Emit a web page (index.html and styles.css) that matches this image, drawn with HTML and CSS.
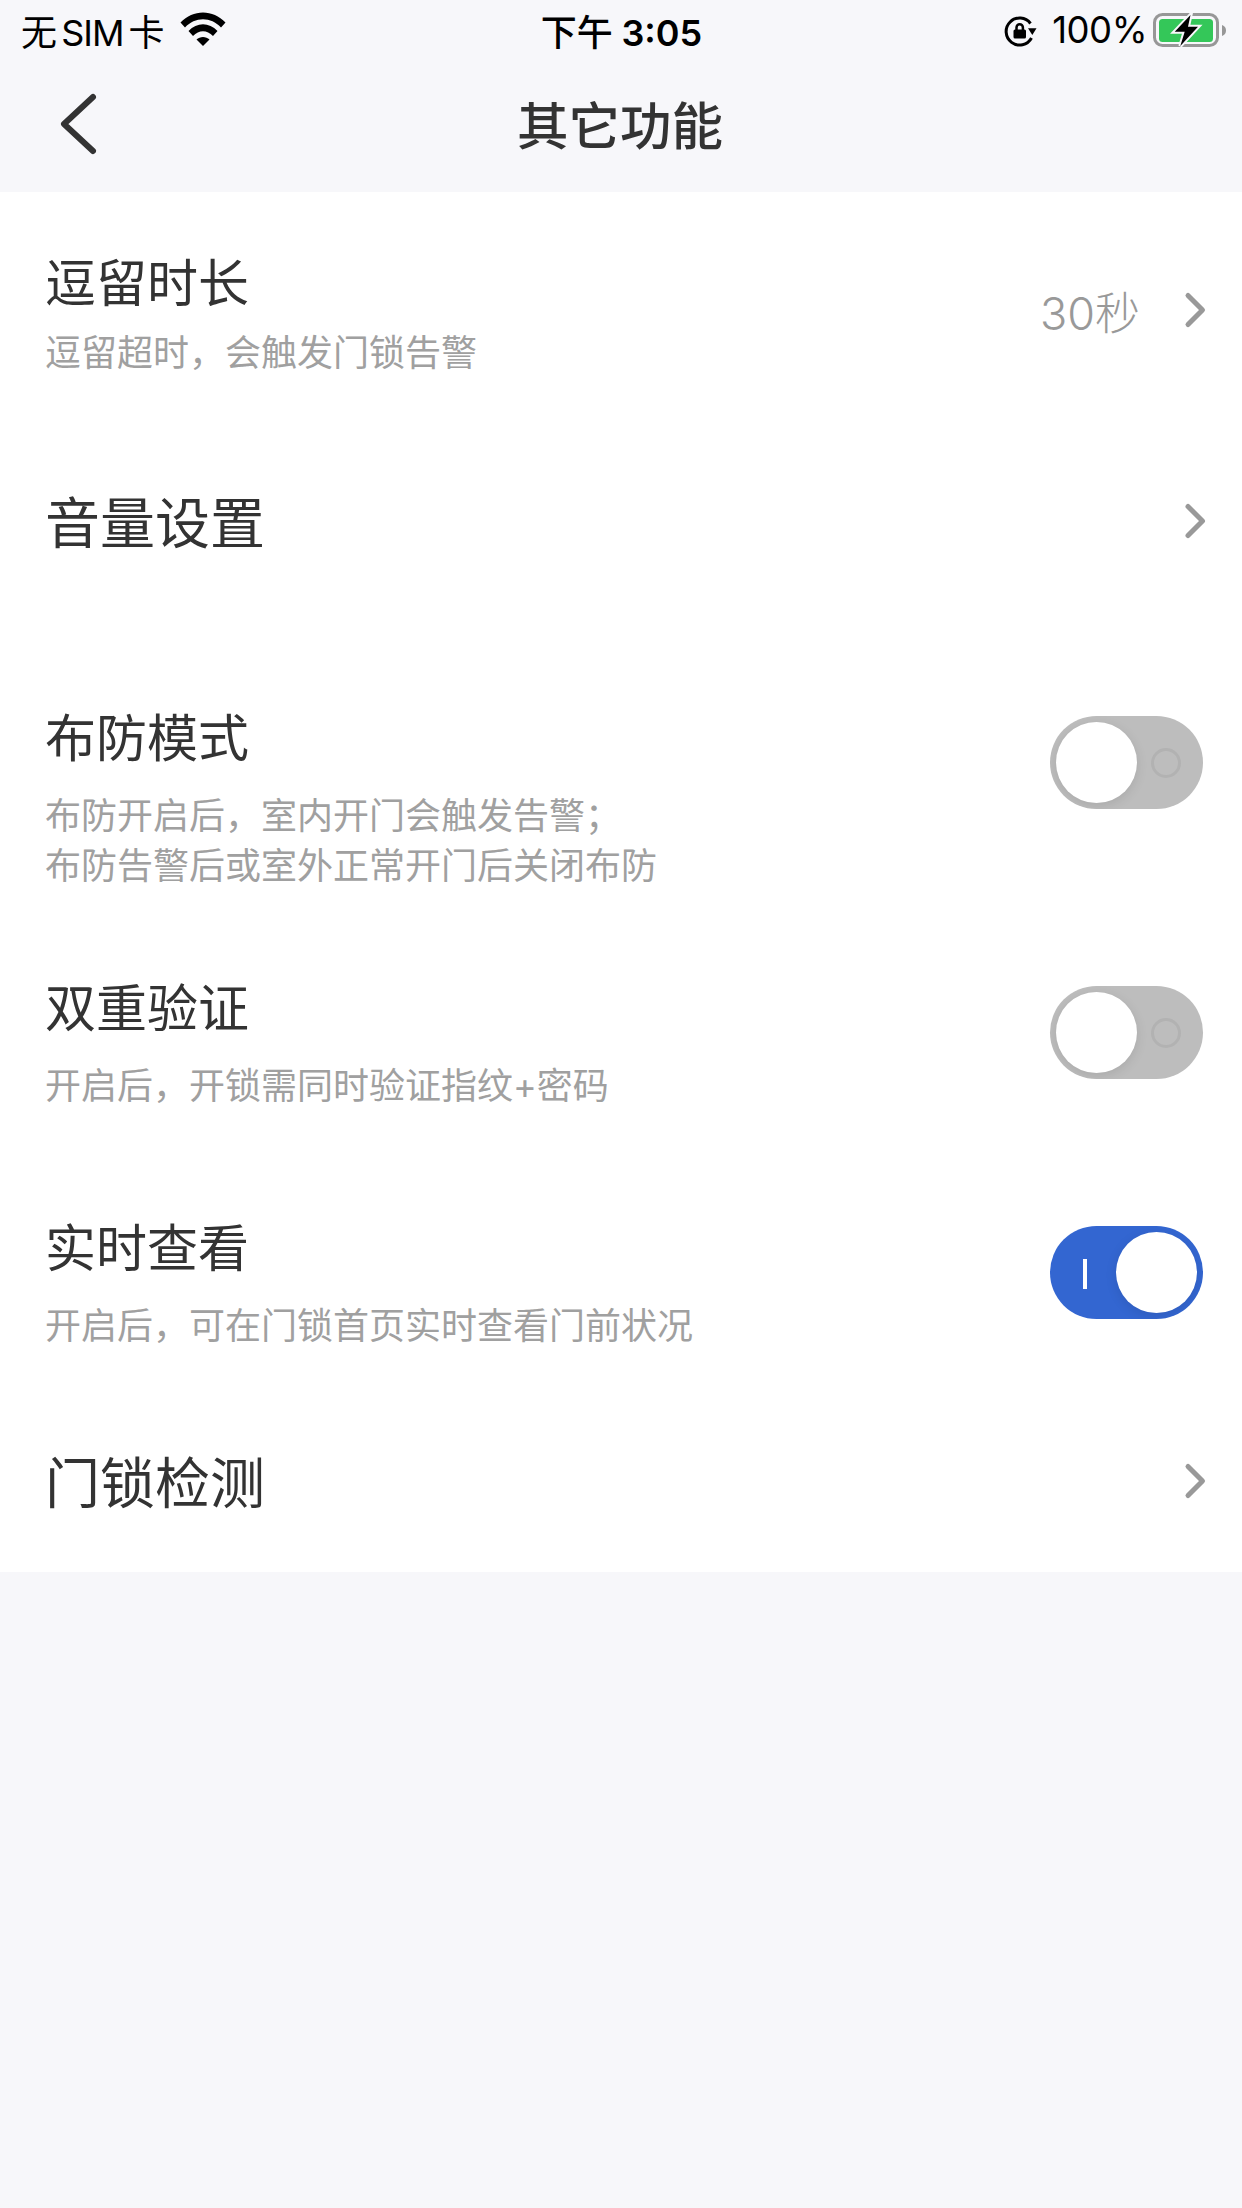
FILE: index.html
```html
<!DOCTYPE html>
<html lang="zh-CN">
<head>
    <meta charset="UTF-8">
    <meta name="viewport" content="width=device-width, initial-scale=1.0">
    <title>其它功能</title>
    <link rel="stylesheet" href="styles.css">
</head>
<body>
    <div class="status-bar">
        <div class="status-left">
            <span class="carrier">无 SIM 卡</span>
            <svg class="wifi-icon" width="46" height="34" viewBox="0 0 46 34">
                <path d="M0.5 10.5C13 -3 33 -3 45.5 10.5L41 15.5C31 4.5 15 4.5 5 15.5Z"/>
                <path d="M8.5 19C17 10 29 10 37.5 19L33 24C27 17.5 19 17.5 13 24Z"/>
                <path d="M16.5 27.500C20 24 26 24 29.500 27.500L23 34Z"/>
            </svg>
        </div>
        <div class="status-time">下午 <b>3:05</b></div>
        <div class="status-right">
            <svg class="lock-icon" width="34" height="32" viewBox="0 0 34 32">
                <path class="lock-ring" d="M27.500 23A13.500 13.500 0 1 1 26.500 8.500"/>
                <path d="M24 13.300H32.500L28.300 20Z"/>
                <path class="lock-shackle" d="M12.500 15V12.500A3.200 3.200 0 0 1 18.900 12.500V15"/>
                <rect x="9.500" y="14.500" width="12.500" height="9" rx="1.500"/>
            </svg>
            <span class="battery-text">100%</span>
            <svg class="battery-icon" width="75" height="36" viewBox="0 0 75 36">
                <rect class="battery-case" x="2.500" y="2.500" width="63" height="31" rx="8"/>
                <rect class="battery-level" x="7" y="7" width="54" height="23" rx="3.500"/>
                <path class="battery-nub" d="M70 13C73 14 74 16 74 18.500C74 21 73 23 70 24Z"/>
                <path class="battery-bolt" d="M38.500 3L22.700 19.700H32.700L28.300 34L46 14.700H36Z"/>
            </svg>
        </div>
    </div>

    <div class="nav-bar">
        <svg class="back-icon" width="40" height="64" viewBox="0 0 40 64">
            <path d="M34 5L5 32L34 59"/>
        </svg>
        <div class="nav-title">其它功能</div>
    </div>

    <div class="settings-list">
        <div class="setting-row">
            <div class="setting-text">
                <div class="setting-title">逗留时长</div>
                <div class="setting-desc">逗留超时，会触发门锁告警</div>
            </div>
            <span class="setting-value">30秒</span>
            <svg class="chevron chevron-raised" width="24" height="40" viewBox="0 0 24 40">
                <path d="M4 5.500L18.500 20L4 34.500"/>
            </svg>
        </div>

        <div class="setting-row row-plain row-gap">
            <div class="setting-text">
                <div class="setting-title">音量设置</div>
            </div>
            <svg class="chevron" width="24" height="40" viewBox="0 0 24 40">
                <path d="M4 5.500L18.500 20L4 34.500"/>
            </svg>
        </div>

        <div class="setting-row row-switch row-tall">
            <div class="setting-text">
                <div class="setting-title">布防模式</div>
                <div class="setting-desc">布防开启后，室内开门会触发告警；<br>布防告警后或室外正常开门后关闭布防</div>
            </div>
            <div class="switch"><span class="switch-mark"></span><span class="switch-knob"></span></div>
        </div>

        <div class="setting-row row-switch">
            <div class="setting-text">
                <div class="setting-title">双重验证</div>
                <div class="setting-desc">开启后，开锁需同时验证指纹+密码</div>
            </div>
            <div class="switch"><span class="switch-mark"></span><span class="switch-knob"></span></div>
        </div>

        <div class="setting-row row-switch row-short">
            <div class="setting-text">
                <div class="setting-title">实时查看</div>
                <div class="setting-desc">开启后，可在门锁首页实时查看门前状况</div>
            </div>
            <div class="switch switch-on"><span class="switch-mark"></span><span class="switch-knob"></span></div>
        </div>

        <div class="setting-row row-plain">
            <div class="setting-text">
                <div class="setting-title">门锁检测</div>
            </div>
            <svg class="chevron" width="24" height="40" viewBox="0 0 24 40">
                <path d="M4 5.500L18.500 20L4 34.500"/>
            </svg>
        </div>
    </div>
</body>
</html>
```

FILE: styles.css
```css
body {
    margin: 0;
    width: 1242px;
    height: 2208px;
    overflow: hidden;
    background-color: #f7f7fa;
    color: #333;
    font-family: "Inter", "Noto Sans CJK SC", sans-serif;
}

/* status bar */
.status-bar {
    height: 60px;
    padding: 0 15px 0 21px;
    display: grid;
    grid-template-columns: 1fr auto 1fr;
    align-items: center;
    color: #000;
    font-size: 36px;
}
.status-left {
    display: flex;
    align-items: center;
}
.carrier {
    letter-spacing: -1px;
    word-spacing: -4px;
    white-space: nowrap;
}
.wifi-icon {
    margin-left: 16px;
    margin-top: -2px;
}
.status-time {
    font-weight: 500;
    white-space: nowrap;
    word-spacing: -1px;
    margin-right: 5px;
}
.status-time b {
    font-weight: 600;
}
.status-right {
    display: flex;
    align-items: center;
    justify-content: flex-end;
}
.lock-icon {
    margin-right: 14px;
    margin-top: 2px;
}
.lock-ring {
    fill: none;
    stroke: #000;
    stroke-width: 3;
}
.lock-shackle {
    fill: none;
    stroke: #000;
    stroke-width: 2.500;
}
.battery-text {
    font-size: 36.500px;
    letter-spacing: -0.500px;
    margin-right: 5px;
}
.battery-case {
    fill: none;
    stroke: #979797;
    stroke-width: 3;
}
.battery-level {
    fill: #34c759;
}
.battery-nub {
    fill: #979797;
}
.battery-bolt {
    fill: #000;
    stroke: #f7f7fa;
    stroke-width: 4;
    paint-order: stroke;
}

/* nav bar */
.nav-bar {
    position: relative;
    height: 132px;
    display: flex;
    align-items: center;
    justify-content: center;
}
.back-icon {
    position: absolute;
    left: 59px;
    top: 32px;
}
.back-icon path {
    fill: none;
    stroke: #333;
    stroke-width: 6;
    stroke-linecap: round;
    stroke-linejoin: round;
}
.nav-title {
    font-size: 51.500px;
    font-weight: 500;
    margin: -8px 2px 0 0;
}

/* settings rows */
.settings-list {
    background-color: #fff;
}
.setting-row {
    box-sizing: border-box;
    height: 240px;
    padding: 56px 34px 54px 45px;
    display: flex;
    align-items: center;
}
.row-plain {
    height: 180px;
}
.row-plain .setting-title {
    font-size: 55px;
}
.row-plain .chevron {
    margin-top: -4px;
}
.row-gap {
    margin-bottom: 36px;
}
.row-switch {
    align-items: flex-start;
}
.row-switch .setting-desc {
    margin-top: 17px;
}
.row-tall {
    height: 270px;
}
.row-short {
    height: 234px;
}
.setting-text {
    flex: 1;
}
.setting-title {
    font-size: 51px;
    line-height: 70px;
    color: #333;
}
.setting-desc {
    margin-top: 9px;
    font-size: 36px;
    line-height: 50px;
    color: #a0a0a0;
}
.setting-value {
    font-size: 45px;
    font-weight: 300;
    color: #999;
    margin: -6px 44px 0 0;
}
.chevron-raised {
    margin-top: -6px;
}
.chevron path {
    fill: none;
    stroke: #999;
    stroke-width: 5;
    stroke-linecap: round;
    stroke-linejoin: round;
}

/* toggle switches */
.switch {
    position: relative;
    box-sizing: border-box;
    width: 153px;
    height: 93px;
    margin: 12px 5px 0 0;
    padding: 6px;
    border-radius: 47px;
    background-color: #bdbdbd;
    display: flex;
    overflow: hidden;
}
.switch-knob {
    width: 81px;
    height: 81px;
    border-radius: 50%;
    background-color: #fff;
    box-shadow: 0 3px 12px rgba(0, 0, 0, 0.1);
}
.switch-mark {
    position: absolute;
    right: 22px;
    top: 32px;
    box-sizing: border-box;
    width: 30px;
    height: 30px;
    border: 3px solid #b2b2b2;
    border-radius: 50%;
}
.switch-on {
    background-color: #3366d1;
    justify-content: flex-end;
}
.switch-on .switch-mark {
    left: 33px;
    right: auto;
    top: 33px;
    width: 4px;
    border: 0;
    border-radius: 0;
    background-color: #fff;
}
```
